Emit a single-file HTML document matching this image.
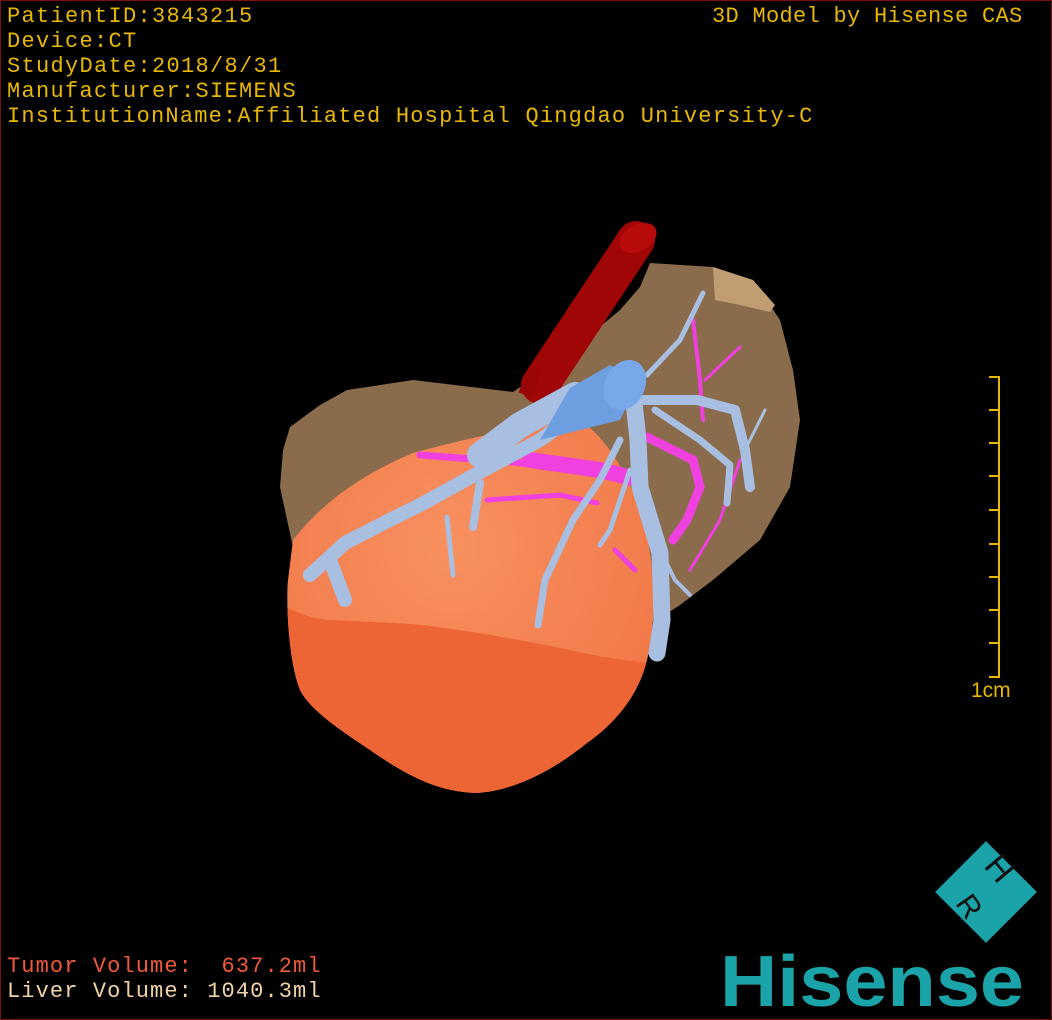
<!DOCTYPE html>
<html><head><meta charset="utf-8"><style>
html,body{margin:0;padding:0;background:#000;}
#v{position:relative;width:1050px;height:1018px;border:1px solid #7a1010;overflow:hidden;background:#000;}
.t{position:absolute;font-family:"Liberation Mono",monospace;font-size:22px;letter-spacing:1.3px;color:#e8b800;white-space:pre;line-height:25px;}
svg{position:absolute;left:0;top:0;}
</style></head><body><div id="v">
<svg width="1050" height="1018" viewBox="1 1 1050 1018">
<defs>
<radialGradient id="tg" cx="0.45" cy="0.35" r="0.7"><stop offset="0" stop-color="#f89060"/><stop offset="1" stop-color="#f07545"/></radialGradient>
<clipPath id="tc"><path id="tp" d="M293,540 C320,505 360,475 413,453 C460,440 540,422 580,420 C610,440 640,490 650,553 C655,590 655,630 647,660 C640,690 620,720 587,743 C560,765 520,790 477,793 C440,792 410,778 370,750 C340,730 310,710 300,690 C288,660 286,600 288,580 Z"/></clipPath>
</defs>
<path d="M280,487 L283,450 L290,427 L320,405 L347,390 L413,380 L513,392 L560,360 L620,310 L640,287 L650,263 L713,267 L753,280 L780,320 L793,370 L800,420 L790,487 L760,540 L713,580 L680,605 L657,620 L600,640 L400,620 L300,580 Z" fill="#8a6b4b"/>
<path d="M713,267 L753,280 L775,305 L770,312 L740,305 L715,300 Z" fill="#c19d74"/>
<line x1="636" y1="240" x2="540" y2="385" stroke="#a00606" stroke-width="38" stroke-linecap="round"/>
<ellipse cx="638" cy="238" rx="20" ry="13" transform="rotate(-30 638 238)" fill="#b80c0c"/>
<line x1="535" y1="370" x2="525" y2="395" stroke="#9a0606" stroke-width="14"/>
<g clip-path="url(#tc)">
<rect x="280" y="410" width="380" height="390" fill="url(#tg)"/>
<path d="M280,605 L305,615 C320,620 330,620 330,620 C380,622 420,624 437,627 C500,635 560,648 603,657 L670,666 L670,800 L280,800 Z" fill="#ee6535"/>
</g>
<g stroke="#f040e0" fill="none" stroke-linecap="round">
<path d="M420,455 L513,462 L580,470 L615,470" stroke-width="7"/>
<path d="M530,460 L600,470 L640,480" stroke-width="16"/>
<path d="M647,437 L693,460 L700,487 L687,520 L673,540" stroke-width="9"/>
<path d="M487,500 L560,495 L597,503" stroke-width="5"/>
<path d="M693,320 L700,380 L703,420" stroke-width="4"/>
<path d="M740,347 L705,380" stroke-width="3"/>
<path d="M740,460 L720,520 L690,570" stroke-width="3"/>
<path d="M615,550 L635,570" stroke-width="5"/>
</g>
<g stroke="#a8bfe2" fill="none" stroke-linecap="round" stroke-linejoin="round">
<path d="M575,395 L520,425 L480,455" stroke-width="26"/>
<path d="M585,408 L540,440 L480,472 L420,505 L380,525 L345,543 L310,575" stroke-width="14"/>
<path d="M633,393 L638,440 L640,487 L660,553 L662,620 L657,653" stroke-width="17"/>
<path d="M620,440 L600,480 L573,520 L545,580 L538,625" stroke-width="7"/>
<path d="M643,400 L697,400 L735,410 L745,450 L750,487" stroke-width="10"/>
<path d="M655,410 L700,440 L730,465 L727,503" stroke-width="7"/>
<path d="M647,375 L680,340 L703,293" stroke-width="5"/>
<path d="M480,483 L473,527" stroke-width="8"/>
<path d="M447,517 L453,575" stroke-width="5"/>
<path d="M665,560 L675,580 L690,595" stroke-width="4"/>
<path d="M630,470 L610,530 L600,545" stroke-width="5"/>
<path d="M745,450 L765,410" stroke-width="3"/>
<path d="M330,560 L345,600" stroke-width="14"/>
</g>
<path d="M570,388 L610,365 L640,380 L620,420 L580,430 L540,440 L560,405 Z" fill="#6d9fe0"/>
<ellipse cx="625" cy="385" rx="20" ry="26" transform="rotate(25 625 385)" fill="#78a8ea"/>
<g stroke="#e8b800" stroke-width="2">
<line x1="999" y1="376" x2="999" y2="678"/>
<line x1="989" y1="377" x2="999" y2="377"/><line x1="989" y1="410" x2="999" y2="410"/>
<line x1="989" y1="443" x2="999" y2="443"/><line x1="989" y1="476" x2="999" y2="476"/>
<line x1="989" y1="510" x2="999" y2="510"/><line x1="989" y1="544" x2="999" y2="544"/>
<line x1="989" y1="577" x2="999" y2="577"/><line x1="989" y1="610" x2="999" y2="610"/>
<line x1="989" y1="643" x2="999" y2="643"/><line x1="989" y1="677" x2="999" y2="677"/>
</g>
<text x="971" y="697" font-family="Liberation Sans,sans-serif" font-size="21" fill="#e8b800">1cm</text>
<g transform="rotate(45 986 892)">
<rect x="950" y="856" width="72" height="72" fill="#1aa3a8"/>
</g>
<text x="1000" y="880" font-family="Liberation Sans,sans-serif" font-size="34" fill="#111" text-anchor="middle" transform="rotate(50 1000 868)">H</text>
<text x="970" y="917" font-family="Liberation Sans,sans-serif" font-size="30" fill="#111" text-anchor="middle" transform="rotate(55 970 906)">R</text>
<text x="720" y="1006" font-family="Liberation Sans,sans-serif" font-weight="bold" font-size="72" fill="#1aa3a8" textLength="304" lengthAdjust="spacingAndGlyphs">Hisense</text>
</svg>
<div class="t" style="left:6px;top:3px">PatientID:3843215
Device:CT
StudyDate:2018/8/31
Manufacturer:SIEMENS</div>
<div class="t" style="left:6px;top:103px;letter-spacing:1.2px">InstitutionName:Affiliated Hospital Qingdao University-C</div>
<div class="t" style="left:711px;top:3px;letter-spacing:0.3px">3D Model by Hisense CAS</div>
<div class="t" style="left:6px;top:953px;color:#f05a3a;letter-spacing:1.1px">Tumor Volume:  637.2ml</div>
<div class="t" style="left:6px;top:978px;color:#f2d3a6;letter-spacing:1.1px">Liver Volume: 1040.3ml</div>
</div></body></html>
